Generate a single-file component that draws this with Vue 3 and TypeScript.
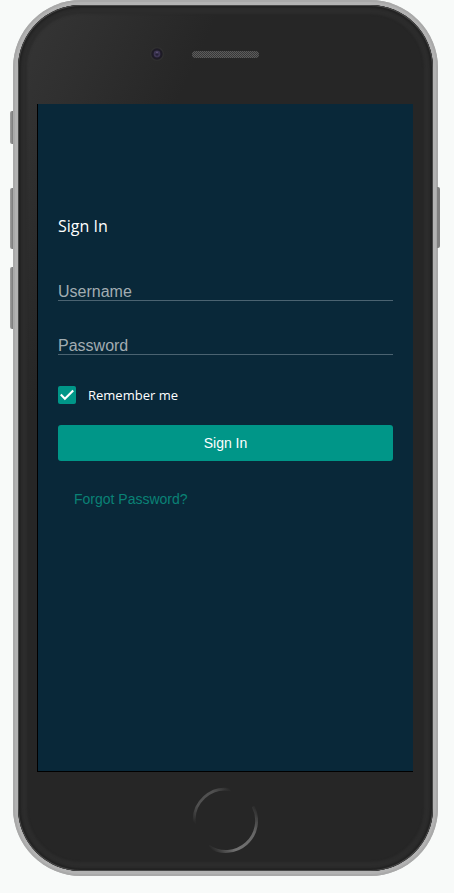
<script setup lang="ts">
import { ref } from 'vue'

const username = ref<string>('')
const password = ref<string>('')
const remember = ref<boolean>(true)
</script>

<template>
  <main class="stage">
    <div class="phone">
      <i class="side mute"></i>
      <i class="side up"></i>
      <i class="side down"></i>
      <i class="side power"></i>
      <div class="body">
        <div class="top">
          <svg class="camera" width="16" height="16" viewBox="0 0 16 16">
            <circle cx="8" cy="8" r="7" fill="#303030" />
            <circle cx="8" cy="8" r="5.7" fill="#1e1b26" />
            <circle cx="8" cy="8" r="3.4" fill="#3d3553" />
            <circle cx="8" cy="8.3" r="1.4" fill="#242035" />
            <circle cx="8" cy="6.6" r="1" fill="#5d5476" />
          </svg>
          <svg class="speaker" width="67" height="7" viewBox="0 0 67 7">
            <defs>
              <pattern id="mesh" width="2" height="2" patternUnits="userSpaceOnUse">
                <rect width="2" height="2" fill="#383838" />
                <rect width="1" height="1" fill="#5c5c5c" />
                <rect x="1" y="1" width="1" height="1" fill="#5c5c5c" />
              </pattern>
            </defs>
            <rect width="67" height="7" rx="3.5" fill="url(#mesh)" />
          </svg>
        </div>
        <form class="screen" @submit.prevent>
          <h1>Sign In</h1>
          <input v-model="username" class="field" type="text" placeholder="Username" />
          <input v-model="password" class="field" type="password" placeholder="Password" />
          <label class="remember">
            <input v-model="remember" type="checkbox" />
            <span class="box">
              <svg v-if="remember" width="18" height="18" viewBox="0 0 18 18">
                <path d="M2.8 8.6 6.9 12.7 15.2 4.5" fill="none" stroke="#fff" stroke-width="2.1" />
              </svg>
            </span>
            <span>Remember me</span>
          </label>
          <button class="submit" type="submit">Sign In</button>
          <a class="forgot">Forgot Password?</a>
        </form>
        <div class="bottom">
          <svg class="home" width="66" height="66" viewBox="0 0 68 68">
            <defs>
              <linearGradient id="arcTop" gradientUnits="userSpaceOnUse" x1="2" y1="37" x2="40" y2="3">
                <stop offset="0" stop-color="#606060" stop-opacity="0" />
                <stop offset=".3" stop-color="#505050" />
                <stop offset=".7" stop-color="#505050" />
                <stop offset="1" stop-color="#606060" stop-opacity="0" />
              </linearGradient>
              <linearGradient id="arcBottom" gradientUnits="userSpaceOnUse" x1="17" y1="61" x2="66" y2="20">
                <stop offset="0" stop-color="#777" stop-opacity="0" />
                <stop offset=".3" stop-color="#727272" />
                <stop offset=".7" stop-color="#666" />
                <stop offset="1" stop-color="#707070" stop-opacity="0" />
              </linearGradient>
            </defs>
            <path d="M2.5 38A31.8 31.8 0 0 1 41 3" fill="none" stroke="url(#arcTop)" stroke-width="2.8" />
            <path d="M17 61A31.8 31.8 0 0 0 63 20" fill="none" stroke="url(#arcBottom)" stroke-width="3" />
          </svg>
        </div>
      </div>
    </div>
  </main>
</template>

<style>
body {
  background: #f8faf9;
}
</style>

<style scoped>
* {
  box-sizing: border-box;
}
.stage {
  height: 893px;
  padding-left: 13px;
  overflow: hidden;
}
.phone {
  position: relative;
  width: 425px;
  height: 876px;
  padding: 5px;
  border-radius: 68px;
  background: #b2b2b2;
  box-shadow: inset 0 0 0 2px #a9a9a9;
}
.body {
  display: flex;
  flex-direction: column;
  height: 866px;
  border-radius: 63px;
  overflow: hidden;
  background: linear-gradient(115deg, #363636 0, #303030 10%, #262626 25%, #262626 100%);
  box-shadow: inset 0 0 0 1px #484848, inset 0 0 2px 3px #222, inset 0 0 2px 9px #2c2c2c;
}
.side {
  position: absolute;
  left: -3px;
  width: 3px;
  background: linear-gradient(90deg, #a0a0a0, #7b7b7b);
  border-radius: 2px 0 0 2px;
}
.mute {
  top: 111px;
  height: 33px;
}
.up {
  top: 188px;
  height: 61px;
}
.down {
  top: 267px;
  height: 62px;
}
.power {
  left: auto;
  right: -2px;
  top: 187px;
  height: 61px;
  border-radius: 0 2px 2px 0;
  background: #808080;
}
.top {
  flex: none;
  display: flex;
  align-items: flex-start;
  height: 99px;
  padding-left: 131px;
}
.camera {
  margin-top: 41px;
}
.speaker {
  margin: 46px 0 0 27px;
}
.screen {
  flex: none;
  display: flex;
  flex-direction: column;
  width: 376px;
  height: 668px;
  margin-left: 19px;
  padding: 110px 20px 0;
  border-left: 1px solid #000;
  border-bottom: 1px solid #000;
  background: #092839;
  color: #fff;
}
h1 {
  margin: 0;
  font: 400 16px/24px "Open Sans", sans-serif;
}
.field {
  width: 100%;
  height: 19px;
  margin: 44px 0 0;
  padding: 1px 0 0;
  border: 0;
  border-bottom: 1px solid #4b6371;
  border-radius: 0;
  outline: 0;
  background: transparent;
  color: #fff;
  font: 16px/18px "Liberation Sans", Arial, sans-serif;
}
.field + .field {
  margin-top: 35px;
}
.field::placeholder {
  color: #a2adb2;
  opacity: 1;
  line-height: 19px;
}
.remember {
  display: flex;
  align-items: center;
  gap: 12px;
  height: 18px;
  margin-top: 31px;
  font: 13px/18px "Open Sans", sans-serif;
}
.remember input {
  display: none;
}
.box {
  width: 18px;
  height: 18px;
  border-radius: 2px;
  background: #009688;
}
.box svg {
  display: block;
}
.submit {
  height: 36px;
  margin: 21px 0 0;
  padding: 0;
  border: 0;
  border-radius: 3px;
  background: #009688;
  color: #fff;
  font: 14px/36px "Liberation Sans", Arial, sans-serif;
}
.forgot {
  margin: 29px 0 0 16px;
  color: #0a8276;
  font: 14px/18px "Liberation Sans", Arial, sans-serif;
}
.bottom {
  flex: 1;
  padding-left: 174px;
}
.home {
  display: block;
  margin-top: 15px;
}
</style>
